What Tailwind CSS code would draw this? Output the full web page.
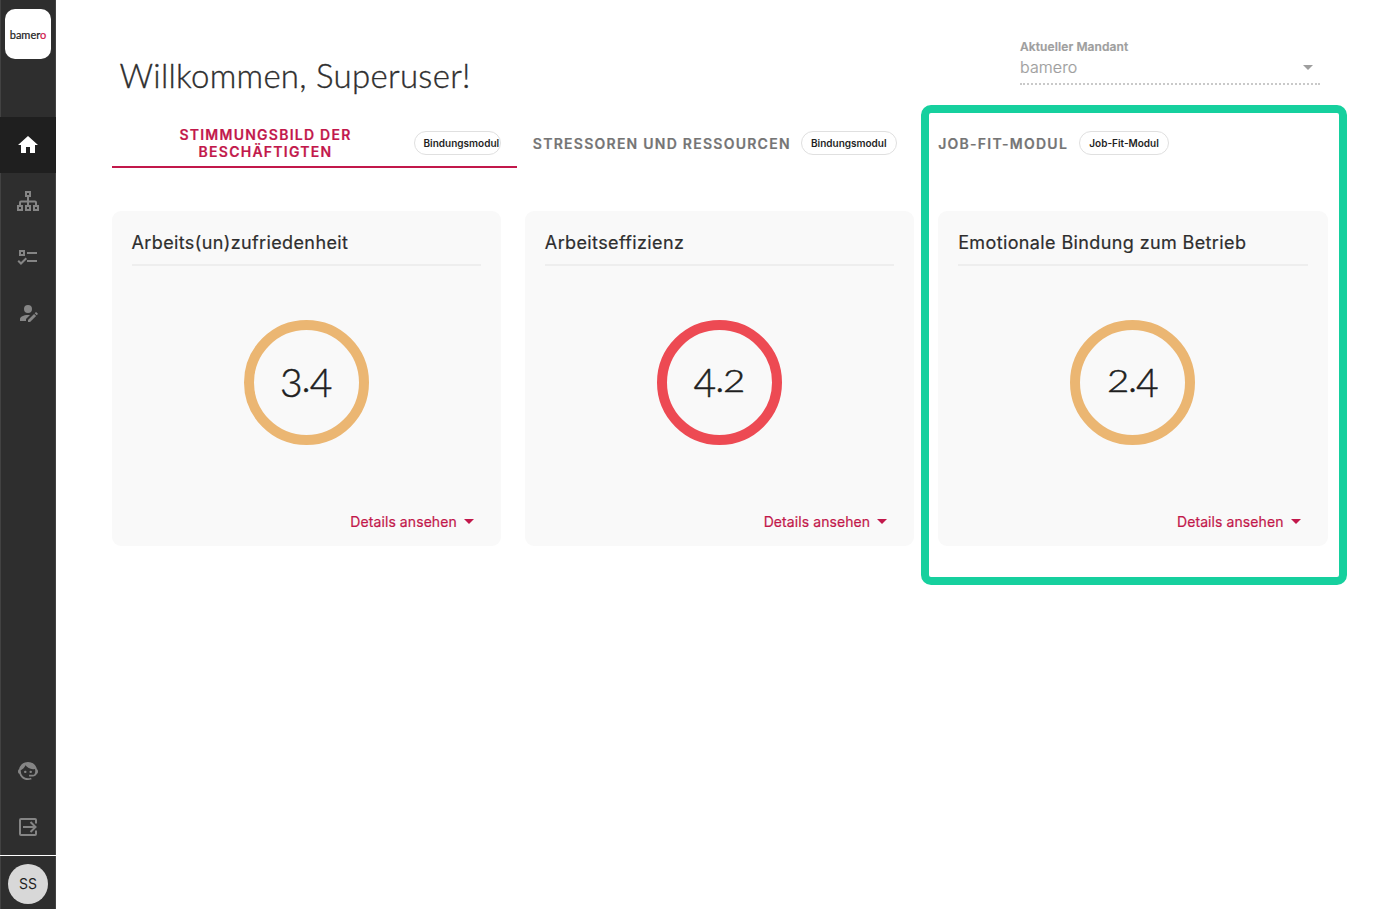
<!DOCTYPE html>
<html lang="de">
<head>
<meta charset="utf-8">
<title>bamero</title>
<script src="https://cdn.jsdelivr.net/npm/@tailwindcss/browser@4"></script>
</head>
<body class="flex h-[909px] w-[1380px] overflow-hidden bg-white font-['Inter',sans-serif] text-[#2e2e2e]">
<aside class="flex w-14 shrink-0 flex-col items-center border-x border-[#424242] bg-[#2e2e2e] text-[#858585]">
  <div class="mt-[9px] mb-[58px] flex h-[50px] w-[46px] items-center justify-center rounded-[10px] bg-white font-['Lato',sans-serif] text-[11px] leading-none text-[#222]"><span class="whitespace-nowrap [-webkit-text-stroke:0.2px_currentColor]">bamer<span class="text-[#d0164b]">o</span></span></div>
  <nav class="flex w-14 flex-col">
    <a class="flex h-14 items-center justify-center bg-[#1f1f1f] text-white"><svg class="size-6" viewBox="0 0 24 24" fill="currentColor"><path d="M10 20V14H14V20H19V12H22L12 3L2 12H5V20H10Z"/></svg></a>
    <a class="flex h-14 items-center justify-center"><svg class="size-6" viewBox="0 0 24 24" fill="none" stroke="currentColor" stroke-width="2"><path d="M10 3h4v4h-4zM2 17h4v4H2zM10 17h4v4h-4zM18 17h4v4h-4zM12 7v10M4 17v-3.500q0-1 1-1h14q1 0 1 1V17"/></svg></a>
    <a class="flex h-14 items-center justify-center"><svg class="size-6" viewBox="0 0 24 24" fill="none" stroke="currentColor" stroke-width="2"><path d="M4 6h4v4H4zM11 8h10M11 16h10M2.200 15.700l2.800 2.800L10.300 13.200"/></svg></a>
    <a class="flex h-14 items-center justify-center"><svg class="size-6" viewBox="0 0 24 24" fill="currentColor"><path d="M21.7 13.350L20.700 14.350L18.650 12.300L19.650 11.300C19.860 11.090 20.210 11.090 20.420 11.300L21.700 12.580C21.910 12.790 21.910 13.140 21.700 13.350M12 18.940L18.060 12.880L20.110 14.930L14.060 21H12V18.940M12 14C7.580 14 4 15.790 4 18V20H10V18.110L14 14.110C13.340 14.030 12.670 14 12 14M12 4A4 4 0 0 0 8 8A4 4 0 0 0 12 12A4 4 0 0 0 16 8A4 4 0 0 0 12 4Z"/></svg></a>
  </nav>
  <div class="mt-auto flex w-14 flex-col">
    <a class="flex h-14 items-center justify-center"><svg class="size-6" viewBox="0 0 24 24" fill="currentColor"><path d="M18.72 14.76C19.07 13.91 19.26 13 19.26 12C19.26 11.28 19.15 10.59 18.96 9.95C18.31 10.1 17.63 10.18 16.92 10.18C13.86 10.18 11.15 8.67 9.5 6.34C8.61 8.5 6.91 10.26 4.77 11.22C4.73 11.47 4.73 11.74 4.73 12A7.27 7.27 0 0 0 12 19.27C13.05 19.27 14.06 19.04 14.97 18.63C15.54 19.72 15.8 20.26 15.78 20.26C14.14 20.81 12.87 21.08 12 21.08C9.58 21.08 7.27 20.13 5.57 18.42C4.53 17.38 3.76 16.11 3.33 14.73C2.500 14.500 2 13.700 2 12.450C2 11.200 2.400 10.400 3.09 10.18C3.93 6.04 7.6 2.92 12 2.92C14.4 2.92 16.71 3.87 18.42 5.58C19.69 6.84 20.54 8.45 20.89 10.18C21.600 10.500 22 11.300 22 12.450C22 13.700 21.600 14.400 20.900 14.730C20 16.800 18.700 17.400 17 17.400H13.08V15.73H17.910L18.72 14.76M9.27 11.77A1.14 1.14 0 1 1 9.27 14.04A1.14 1.14 0 1 1 9.27 11.77M14.72 11.77A1.14 1.14 0 1 1 14.72 14.04A1.14 1.14 0 1 1 14.72 11.77Z"/></svg></a>
    <a class="flex h-14 items-center justify-center"><svg class="size-6" viewBox="0 0 24 24" fill="none" stroke="currentColor" stroke-width="2"><path d="M20 8.500V5q0-1-1-1H5q-1 0-1 1v14q0 1 1 1h14q1 0 1-1v-3.500M7 12h12M14.500 7l5 5l-5 5"/></svg></a>
    <div class="flex h-[54px] items-start justify-center border-t border-white pt-2"><span class="flex size-10 items-center justify-center rounded-full bg-[#d8d8d8] text-sm text-[#1f1f1f]">SS</span></div>
  </div>
</aside>
<main class="relative flex-1">
  <header class="flex h-[119px] justify-between pr-[60px] pl-[63.500px]">
    <h1 class="pt-[55px] font-['Lato',sans-serif] text-[33px] leading-10 font-light tracking-[0.280px] whitespace-nowrap [-webkit-text-stroke:0.35px_currentColor]">Willkommen, Superuser!</h1>
    <div class="mt-10 h-[45px] w-[300px] border-b-2 border-dotted border-[#c9c9c9] text-[#9e9e9e]">
      <div class="text-xs leading-[14px] font-semibold tracking-[0.100px] [-webkit-text-stroke:0.2px_currentColor]">Aktueller Mandant</div>
      <div class="flex items-center justify-between pr-[7px] text-base leading-[26px] font-light tracking-[0.100px] [-webkit-text-stroke:0.2px_currentColor]">bamero<svg class="h-[5px] w-[10px]" viewBox="0 0 10 5" fill="currentColor"><path d="M0 0h10L5 5z"/></svg></div>
    </div>
  </header>
  <div class="ml-[55.500px] grid w-[1216px] grid-cols-3 text-sm leading-[17px] font-semibold tracking-[1.250px] text-[#757575]">
    <div class="flex h-[48.500px] items-center border-b-2 border-[#c2184b] px-4 pt-0.5 text-[#c2184b] [-webkit-text-stroke:0.2px_currentColor]">
      <span class="w-[276px] shrink-0 text-center">STIMMUNGSBILD DER<br>BESCHÄFTIGTEN</span>
      <span class="ml-[10px] flex h-6 w-[87px] shrink-0 items-center overflow-hidden rounded-full border border-[#e0e0e0] pl-[9px] text-[10px] tracking-normal text-[#1f1f1f] [-webkit-text-stroke:0]">Bindungsmodul</span>
    </div>
    <div class="flex h-[48.500px] items-center border-b-2 border-transparent pt-0.5 pl-4 whitespace-nowrap [-webkit-text-stroke:0.2px_currentColor]">STRESSOREN UND RESSOURCEN
      <span class="ml-[10px] flex h-6 w-24 items-center justify-center rounded-full border border-[#e0e0e0] text-[10px] tracking-normal text-[#1f1f1f] [-webkit-text-stroke:0]">Bindungsmodul</span>
    </div>
    <div class="flex h-[48.500px] items-center border-b-2 border-transparent pt-0.5 pl-4 whitespace-nowrap [-webkit-text-stroke:0.2px_currentColor]">JOB-FIT-MODUL
      <span class="ml-[11px] flex h-6 w-[90px] items-center justify-center rounded-full border border-[#e0e0e0] text-[10px] tracking-normal text-[#1f1f1f] [-webkit-text-stroke:0]">Job-Fit-Modul</span>
    </div>
  </div>
  <section class="mt-[43px] ml-[55.500px] grid w-[1216px] grid-cols-3 gap-6">
    <article class="flex h-[335px] flex-col rounded-[9px] bg-[#f9f9f9] px-5">
      <h2 class="h-[55px] border-b-2 border-[#eeeeee] pt-5 text-lg leading-6 font-normal tracking-[0.380px] whitespace-nowrap [-webkit-text-stroke:0.2px_currentColor]">Arbeits(un)zufriedenheit</h2>
      <div class="mt-[54.500px] flex size-[125px] items-baseline justify-center self-center rounded-full border-[10px] border-[#ebb672] pt-[17px] font-['Lato',sans-serif] text-[39px] leading-[60px] font-light text-[#1f1f1f] [-webkit-text-stroke:0.5px_currentColor]"><span class="relative top-[5px]">3</span><span class="-mx-px">.</span><span class="relative top-[5px]">4</span></div>
      <a class="mt-auto mb-3 flex items-center gap-[7px] self-end pr-[7px] text-sm leading-6 font-normal tracking-[0.080px] text-[#c2184b] [-webkit-text-stroke:0.2px_currentColor]">Details ansehen<svg class="h-[5px] w-[10px]" viewBox="0 0 10 5" fill="currentColor"><path d="M0 0h10L5 5z"/></svg></a>
    </article>
    <article class="flex h-[335px] flex-col rounded-[9px] bg-[#f9f9f9] px-5">
      <h2 class="h-[55px] border-b-2 border-[#eeeeee] pt-5 text-lg leading-6 font-normal tracking-[0.380px] whitespace-nowrap [-webkit-text-stroke:0.2px_currentColor]">Arbeitseffizienz</h2>
      <div class="mt-[54.500px] flex size-[125px] items-baseline justify-center self-center rounded-full border-[10px] border-[#ed4a53] pt-[17px] font-['Lato',sans-serif] text-[39px] leading-[60px] font-light text-[#1f1f1f] [-webkit-text-stroke:0.5px_currentColor]"><span class="relative top-[5px]">4</span><span class="-mx-px">.</span><span class="inline-block w-[22px] origin-left scale-x-120 text-[32px]">2</span></div>
      <a class="mt-auto mb-3 flex items-center gap-[7px] self-end pr-[7px] text-sm leading-6 font-normal tracking-[0.080px] text-[#c2184b] [-webkit-text-stroke:0.2px_currentColor]">Details ansehen<svg class="h-[5px] w-[10px]" viewBox="0 0 10 5" fill="currentColor"><path d="M0 0h10L5 5z"/></svg></a>
    </article>
    <article class="flex h-[335px] flex-col rounded-[9px] bg-[#f9f9f9] px-5">
      <h2 class="h-[55px] border-b-2 border-[#eeeeee] pt-5 text-lg leading-6 font-normal tracking-[0.380px] whitespace-nowrap [-webkit-text-stroke:0.2px_currentColor]">Emotionale Bindung zum Betrieb</h2>
      <div class="mt-[54.500px] flex size-[125px] items-baseline justify-center self-center rounded-full border-[10px] border-[#ebb672] pt-[17px] font-['Lato',sans-serif] text-[39px] leading-[60px] font-light text-[#1f1f1f] [-webkit-text-stroke:0.5px_currentColor]"><span class="inline-block w-[22px] origin-left scale-x-120 text-[32px]">2</span><span class="-mx-px">.</span><span class="relative top-[5px]">4</span></div>
      <a class="mt-auto mb-3 flex items-center gap-[7px] self-end pr-[7px] text-sm leading-6 font-normal tracking-[0.080px] text-[#c2184b] [-webkit-text-stroke:0.2px_currentColor]">Details ansehen<svg class="h-[5px] w-[10px]" viewBox="0 0 10 5" fill="currentColor"><path d="M0 0h10L5 5z"/></svg></a>
    </article>
  </section>
  <div class="pointer-events-none absolute top-[105px] left-[865px] h-[480px] w-[426px] rounded-[10px] border-8 border-[#16d09e]"></div>
</main>
</body>
</html>
